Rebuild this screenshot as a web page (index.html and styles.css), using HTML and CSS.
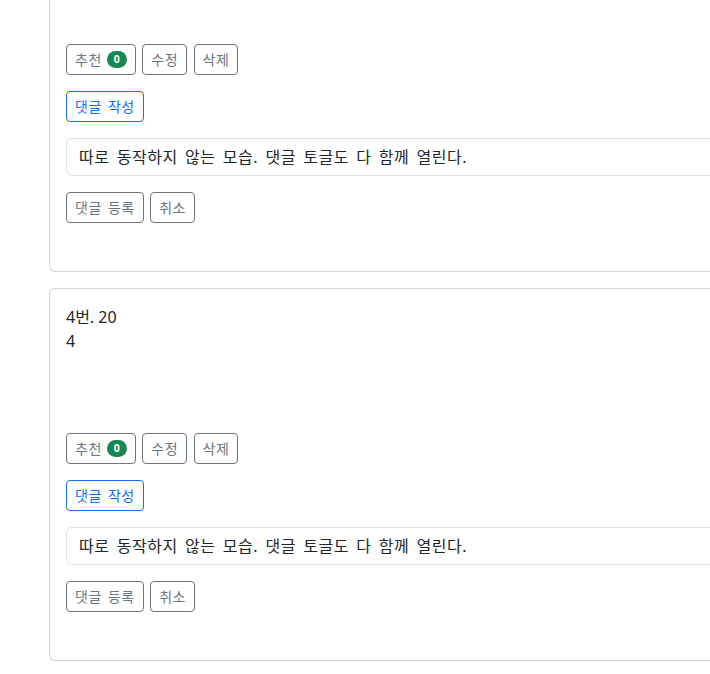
FILE: index.html
```html
<!DOCTYPE html>
<html lang="ko">
<head>
<meta charset="utf-8">
<title>게시글</title>
<link rel="stylesheet" href="styles.css">
</head>
<body>
<div class="page">
  <div class="card first">
    <div class="card-body">
      <div class="content"></div>
      <div class="btn-row">
        <button class="btn btn-sm btn-outline-secondary">추천 <span class="badge">0</span></button>
        <button class="btn btn-sm btn-outline-secondary">수정</button>
        <button class="btn btn-sm btn-outline-secondary">삭제</button>
      </div>
      <div class="btn-row">
        <button class="btn btn-sm btn-outline-primary">댓글 작성</button>
      </div>
      <div class="comment-box">따로 동작하지 않는 모습. 댓글 토글도 다 함께 열린다.</div>
      <div class="btn-row">
        <button class="btn btn-sm btn-outline-secondary">댓글 등록</button>
        <button class="btn btn-sm btn-outline-secondary">취소</button>
      </div>
    </div>
  </div>
  <div class="card">
    <div class="card-body">
      <div class="content">4번. 20<br>4</div>
      <div class="btn-row">
        <button class="btn btn-sm btn-outline-secondary">추천 <span class="badge">0</span></button>
        <button class="btn btn-sm btn-outline-secondary">수정</button>
        <button class="btn btn-sm btn-outline-secondary">삭제</button>
      </div>
      <div class="btn-row">
        <button class="btn btn-sm btn-outline-primary">댓글 작성</button>
      </div>
      <div class="comment-box">따로 동작하지 않는 모습. 댓글 토글도 다 함께 열린다.</div>
      <div class="btn-row">
        <button class="btn btn-sm btn-outline-secondary">댓글 등록</button>
        <button class="btn btn-sm btn-outline-secondary">취소</button>
      </div>
    </div>
  </div>
</div>
</body>
</html>
```

FILE: styles.css
```css
html, body {
  margin: 0;
  padding: 0;
  overflow: hidden;
  background: #fff;
}
body {
  font-family: "Noto Sans", "Noto Sans CJK KR", sans-serif;
  font-size: 16px;
  line-height: 1.5;
  color: #212529;
}
.page {
  padding-left: 49px;
  margin-top: -101px;
}
.card {
  width: 900px;
  border: 1px solid rgba(0, 0, 0, 0.175);
  border-radius: 6px;
  background: #fff;
  box-sizing: border-box;
}
.card + .card {
  margin-top: 16px;
}
.card-body {
  padding: 16px 16px 48px;
  display: flex;
  flex-direction: column;
  gap: 16px;
}
.content {
  height: 48px;
  margin-bottom: 64px;
}
.btn-row {
  display: flex;
  gap: 6.5px;
}
.btn {
  font-family: inherit;
  font-size: 14px;
  line-height: 21px;
  padding: 4px 8px;
  border-radius: 4px;
  background: transparent;
  border: 1px solid;
  display: inline-flex;
  align-items: center;
  gap: 5px;
  letter-spacing: 0.5px;
  word-spacing: 2px;
}
.btn-outline-secondary {
  color: #6c757d;
  border-color: #6c757d;
}
.btn-outline-primary {
  color: #0d6efd;
  border-color: #0d6efd;
}
.badge {
  background: #198754;
  color: #fff;
  font-size: 10.5px;
  font-weight: 700;
  line-height: 1;
  padding: 3px 7px;
  border-radius: 10px;
  letter-spacing: 0;
}
.comment-box {
  border: 1px solid #dee2e6;
  border-radius: 6px;
  padding: 6px 12px;
  height: 24px;
  letter-spacing: 0.55px;
  word-spacing: 2.5px;
}
```
